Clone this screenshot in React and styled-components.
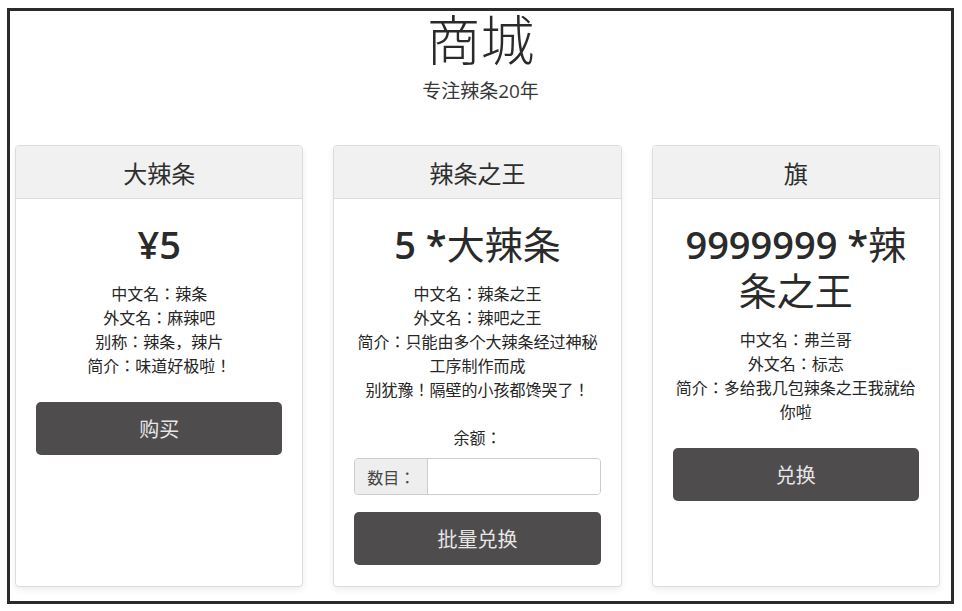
import styled, { createGlobalStyle } from "styled-components";

const GlobalStyle = createGlobalStyle`
body {
  margin : 0;
  background : #ffffff;
  font-family : "Open Sans", "Noto Sans CJK JP", sans-serif;
  color : #333333;
}
`

const Frame = styled.div`
margin : 8px 8px 0 7px;
height : 596px;
box-sizing : border-box;
border : 3px solid #2b2b2b;
display : flex;
flex-direction : column;
`

const Masthead = styled.header`
text-align : center;
padding-top : 1px;
height : 134px;
box-sizing : border-box;

h1 {
  margin : 0;
  font-size : 54px;
  line-height : 56px;
  font-weight : 300;
  color : #2a2a2a;
}

p {
  margin : 11px 0 0 0;
  font-size : 19px;
  line-height : 24px;
  font-weight : 400;
  color : #383838;
}
`

const CardRow = styled.div`
display : flex;
gap : 30px;
padding : 0 11px 0 5px;
align-items : stretch;
`

const Card = styled.section`
flex : 1;
border : 1px solid #dcdcdc;
border-radius : 4px;
background : #ffffff;
box-shadow : 0 3px 6px rgba(0, 0, 0, 0.07);
overflow : hidden;
`

const CardHeader = styled.div`
height : 52px;
background : #f1f1f1;
border-bottom : 1px solid #dcdcdc;
display : flex;
align-items : center;
justify-content : center;
font-size : 24px;
color : #2e2e2e;
`

const CardBody = styled.div`
padding : 22px 20px 21px 20px;
text-align : center;
`

const Price = styled.h2`
margin : 0 0 15px 0;
font-size : 38px;
line-height : 46px;
font-weight : 400;
color : #2a2a2a;

b {
  font-weight : 600;
}
`

const Info = styled.div`
margin-bottom : 24px;

p {
  margin : 0;
  font-size : 16px;
  line-height : 24px;
  color : #262626;
}
`

const Balance = styled.p`
margin : 0 0 8px 0;
font-size : 16px;
line-height : 24px;
color : #262626;
`

const InputGroup = styled.div`
display : flex;
height : 37px;
margin-bottom : 17px;
border : 1px solid #cccccc;
border-radius : 4px;
box-sizing : border-box;
overflow : hidden;

span {
  width : 72px;
  background : #eeeeee;
  border-right : 1px solid #cccccc;
  display : flex;
  align-items : center;
  justify-content : center;
  font-size : 16px;
  color : #444444;
}

input {
  flex : 1;
  border : none;
  outline : none;
  font-size : 16px;
  padding : 0 10px;
  min-width : 0;
}
`

const ActionButton = styled.button`
width : 100%;
height : 53px;
border : none;
border-radius : 5px;
background : #4e4c4d;
color : #e6e6e6;
font-family : inherit;
font-size : 20px;
cursor : pointer;
`

const products = [
  {
    title : "大辣条",
    amount : "¥5",
    unit : "",
    lines : ["中文名：辣条", "外文名：麻辣吧", "别称：辣条，辣片", "简介：味道好极啦！"],
    action : "购买",
  },
  {
    title : "辣条之王",
    amount : "5 *",
    unit : "大辣条",
    lines : ["中文名：辣条之王", "外文名：辣吧之王", "简介：只能由多个大辣条经过神秘工序制作而成", "别犹豫！隔壁的小孩都馋哭了！"],
    action : "批量兑换",
    batch : true,
  },
  {
    title : "旗",
    amount : "9999999 *",
    unit : "辣条之王",
    lines : ["中文名：弗兰哥", "外文名：标志", "简介：多给我几包辣条之王我就给你啦"],
    action : "兑换",
  },
];

function App () {
  return (
    <>
      <GlobalStyle />
      <Frame>
        <Masthead>
          <h1>商城</h1>
          <p>专注辣条20年</p>
        </Masthead>
        <CardRow>
          {products.map(product => (
            <Card key={product.title}>
              <CardHeader>{product.title}</CardHeader>
              <CardBody>
                <Price><b>{product.amount}</b>{product.unit}</Price>
                <Info>
                  {product.lines.map(line => <p key={line}>{line}</p>)}
                </Info>
                {product.batch && <>
                  <Balance>余额：</Balance>
                  <InputGroup>
                    <span>数目：</span>
                    <input type="text" />
                  </InputGroup>
                </>}
                <ActionButton>{product.action}</ActionButton>
              </CardBody>
            </Card>
          ))}
        </CardRow>
      </Frame>
    </>
  );
}

export default App;
